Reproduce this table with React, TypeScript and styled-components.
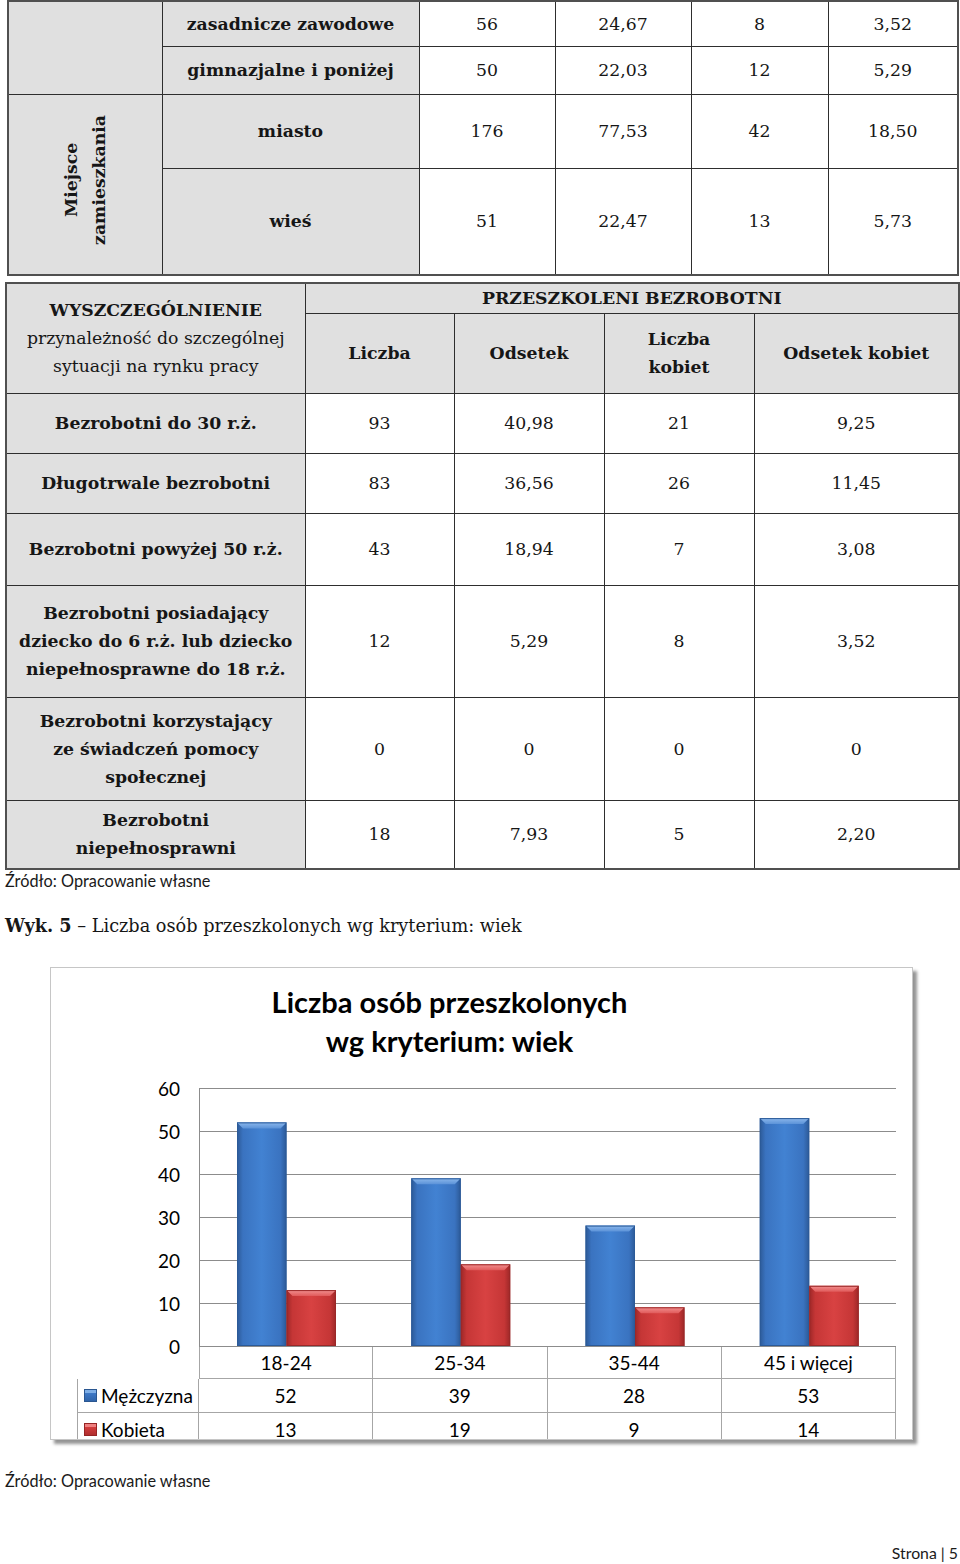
import React from 'react';
import styled, { createGlobalStyle } from 'styled-components';

const GlobalStyle = createGlobalStyle`
  html, body { margin: 0; padding: 0; background: #fff; }
  body { font-family: "DejaVu Serif", serif; color: #161616; }
`;

const Page = styled.div`
  width: 960px;
  height: 1564px;
  display: flex;
  flex-direction: column;
  overflow: hidden;
`;

const Table = styled.table<{ $left: number; $width: number; $top?: number }>`
  border-collapse: collapse;
  table-layout: fixed;
  margin: ${(p) => p.$top ?? 0}px 0 0 ${(p) => p.$left}px;
  width: ${(p) => p.$width}px;
  border: 2px solid #505050;
`;

const Row = styled.tr<{ $h: number }>`
  height: ${(p) => p.$h}px;
`;

const Cell = styled.td<{ $head?: boolean; $bold?: boolean }>`
  border: 1px solid #2e2e2e;
  background: ${(p) => (p.$head ? '#e0e0e0' : '#ffffff')};
  font-weight: ${(p) => (p.$bold ? 700 : 400)};
  text-align: center;
  vertical-align: middle;
  padding: 0 4px;
  font-size: 17.3px;
  line-height: 28px;
  color: #161616;
`;

const Strong = styled.span`
  font-weight: 700;
`;

const Vertical = styled.div`
  display: inline-block;
  writing-mode: vertical-rl;
  transform: rotate(180deg);
  font-weight: 700;
  line-height: 28px;
  text-align: center;
`;

const Note = styled.div<{ $top: number }>`
  margin: ${(p) => p.$top}px 0 0 5px;
  font-family: Lato, "Noto Sans", sans-serif;
  font-size: 16.3px;
  line-height: 22px;
  color: #1a1a1a;
`;

const Caption = styled.div`
  margin: 22px 0 0 5px;
  font-size: 17.7px;
  line-height: 24px;
  color: #161616;
`;

const Frame = styled.div`
  margin: 29px 0 0 50px;
  width: 861px;
  height: 471px;
  border: 1px solid #c6c6c6;
  box-shadow: 4px 4px 3px rgba(0, 0, 0, 0.42);
  overflow: hidden;
  display: flex;
  flex-direction: column;
  font-family: Lato, "Noto Sans", sans-serif;
  color: #000;
  background: #fff;
  flex-shrink: 0;
`;

const ChartTitle = styled.div`
  padding: 14px 64px 0 0;
  text-align: center;
  font-weight: 700;
  font-size: 29px;
  line-height: 39px;
`;

const Plot = styled.svg`
  display: block;
  margin-top: 10px;
  flex-shrink: 0;
  overflow: visible;
  position: relative;
  z-index: 1;
`;

const DataGrid = styled.div`
  display: grid;
  grid-template-columns: 122px repeat(4, 174.25px);
  grid-template-rows: 32px 34px 34px;
  margin-left: 26px;
  flex-shrink: 0;
`;

const GridCell = styled.div<{ $blank?: boolean; $left?: boolean; $legend?: boolean }>`
  box-sizing: border-box;
  display: flex;
  align-items: center;
  justify-content: ${(p) => (p.$legend ? 'flex-start' : 'center')};
  gap: 4px;
  padding-left: ${(p) => (p.$legend ? '6px' : '0')};
  font-size: 19px;
  line-height: 1;
  border-right: ${(p) => (p.$blank ? 'none' : '1px solid #a6a6a6')};
  border-bottom: ${(p) => (p.$blank ? 'none' : '1px solid #a6a6a6')};
  border-left: ${(p) => (p.$left ? '1px solid #a6a6a6' : 'none')};
`;

const Marker = styled.span<{ $c: 'blue' | 'red' }>`
  width: 13px;
  height: 13px;
  flex-shrink: 0;
  box-sizing: border-box;
  border: 1px solid ${(p) => (p.$c === 'blue' ? '#2a5690' : '#962424')};
  background: ${(p) =>
    p.$c === 'blue'
      ? 'linear-gradient(180deg, #7eaee6 0 28%, #3d78c6 30%, #2f64aa 100%)'
      : 'linear-gradient(180deg, #ee8080 0 28%, #d23c3c 30%, #b02e2e 100%)'};
`;

const Footer = styled.div`
  margin-top: auto;
  text-align: right;
  padding-right: 2px;
  font-family: Lato, "Noto Sans", sans-serif;
  font-size: 15.8px;
  line-height: 22px;
  color: #1a1a1a;
`;

const categories = ['18-24', '25-34', '35-44', '45 i więcej'];
const men = [52, 39, 28, 53];
const women = [13, 19, 9, 14];

const PX = 148;
const PW = 697;
const PY0 = 276;
const UNIT = 4.3;
const CAT = PW / 4;
const BW = 49.5;

function Bar({ x, v, color }: { x: number; v: number; color: 'blue' | 'red' }) {
  const h = v * UNIT;
  const y = PY0 - h;
  const b = 6;
  return (
    <g>
      <rect x={x} y={y} width={BW} height={h} fill={`url(#${color}Body)`} />
      <polygon
        points={`${x},${y} ${x + BW},${y} ${x + BW - b},${y + b} ${x + b},${y + b}`}
        fill={`url(#${color}Top)`}
      />
      <rect
        x={x + 0.5}
        y={y + 0.5}
        width={BW - 1}
        height={h - 1}
        fill="none"
        stroke={color === 'blue' ? '#2b5a98' : '#9a2828'}
        strokeWidth={1}
      />
    </g>
  );
}

function Chart() {
  const ticks = [0, 10, 20, 30, 40, 50, 60];
  return (
    <Plot width={850} height={277} viewBox="0 0 850 277">
      <defs>
        <linearGradient id="blueBody" x1="0" x2="1" y1="0" y2="0">
          <stop offset="0" stopColor="#2c5996" />
          <stop offset="0.12" stopColor="#3a73c0" />
          <stop offset="0.5" stopColor="#4282d2" />
          <stop offset="0.88" stopColor="#3a73c0" />
          <stop offset="1" stopColor="#2c5996" />
        </linearGradient>
        <linearGradient id="blueTop" x1="0" x2="0" y1="0" y2="1">
          <stop offset="0" stopColor="#8cb8ec" />
          <stop offset="1" stopColor="#5b92d8" />
        </linearGradient>
        <linearGradient id="redBody" x1="0" x2="1" y1="0" y2="0">
          <stop offset="0" stopColor="#9c2727" />
          <stop offset="0.12" stopColor="#c53636" />
          <stop offset="0.5" stopColor="#d84242" />
          <stop offset="0.88" stopColor="#c53636" />
          <stop offset="1" stopColor="#9c2727" />
        </linearGradient>
        <linearGradient id="redTop" x1="0" x2="0" y1="0" y2="1">
          <stop offset="0" stopColor="#f29090" />
          <stop offset="1" stopColor="#e05a5a" />
        </linearGradient>
      </defs>
      {ticks.map((t) => {
        const y = PY0 - t * UNIT + 0.5;
        return (
          <g key={t}>
            <line x1={PX} x2={PX + PW} y1={y} y2={y} stroke="#8c8c8c" strokeWidth={1} />
            <text
              x={129}
              y={y + 7}
              textAnchor="end"
              fontFamily="Lato, 'Noto Sans', sans-serif"
              fontSize={19}
              fill="#000"
            >
              {t}
            </text>
          </g>
        );
      })}
      <line x1={PX + 0.5} x2={PX + 0.5} y1={PY0 - 60 * UNIT} y2={PY0 + 1} stroke="#8c8c8c" strokeWidth={1} />
      {categories.map((c, i) => {
        const start = PX + i * CAT;
        return (
          <g key={c}>
            <Bar x={start + 38} v={men[i]} color="blue" />
            <Bar x={start + 38 + BW} v={women[i]} color="red" />
          </g>
        );
      })}
    </Plot>
  );
}

export default function App() {
  return (
    <>
      <GlobalStyle />
      <Page>
        <Table $left={7} $width={950}>
          <colgroup>
            <col style={{ width: 154 }} />
            <col style={{ width: 257 }} />
            <col style={{ width: 136 }} />
            <col style={{ width: 136 }} />
            <col style={{ width: 137 }} />
            <col style={{ width: 130 }} />
          </colgroup>
          <tbody>
            <Row $h={45}>
              <Cell $head rowSpan={2} />
              <Cell $head $bold>zasadnicze zawodowe</Cell>
              <Cell>56</Cell>
              <Cell>24,67</Cell>
              <Cell>8</Cell>
              <Cell>3,52</Cell>
            </Row>
            <Row $h={48}>
              <Cell $head $bold>gimnazjalne i poniżej</Cell>
              <Cell>50</Cell>
              <Cell>22,03</Cell>
              <Cell>12</Cell>
              <Cell>5,29</Cell>
            </Row>
            <Row $h={74}>
              <Cell $head rowSpan={2}>
                <Vertical>
                  Miejsce
                  <br />
                  zamieszkania
                </Vertical>
              </Cell>
              <Cell $head $bold>miasto</Cell>
              <Cell>176</Cell>
              <Cell>77,53</Cell>
              <Cell>42</Cell>
              <Cell>18,50</Cell>
            </Row>
            <Row $h={107}>
              <Cell $head $bold>wieś</Cell>
              <Cell>51</Cell>
              <Cell>22,47</Cell>
              <Cell>13</Cell>
              <Cell>5,73</Cell>
            </Row>
          </tbody>
        </Table>

        <Table $left={5} $width={953} $top={6}>
          <colgroup>
            <col style={{ width: 299 }} />
            <col style={{ width: 149 }} />
            <col style={{ width: 150 }} />
            <col style={{ width: 150 }} />
            <col style={{ width: 205 }} />
          </colgroup>
          <tbody>
            <Row $h={30}>
              <Cell $head rowSpan={2}>
                <Strong>WYSZCZEGÓLNIENIE</Strong>
                <br />
                przynależność do szczególnej
                <br />
                sytuacji na rynku pracy
              </Cell>
              <Cell $head $bold colSpan={4}>PRZESZKOLENI BEZROBOTNI</Cell>
            </Row>
            <Row $h={80}>
              <Cell $head $bold>Liczba</Cell>
              <Cell $head $bold>Odsetek</Cell>
              <Cell $head $bold>
                Liczba
                <br />
                kobiet
              </Cell>
              <Cell $head $bold>Odsetek kobiet</Cell>
            </Row>
            <Row $h={60}>
              <Cell $head $bold>Bezrobotni do 30 r.ż.</Cell>
              <Cell>93</Cell>
              <Cell>40,98</Cell>
              <Cell>21</Cell>
              <Cell>9,25</Cell>
            </Row>
            <Row $h={60}>
              <Cell $head $bold>Długotrwale bezrobotni</Cell>
              <Cell>83</Cell>
              <Cell>36,56</Cell>
              <Cell>26</Cell>
              <Cell>11,45</Cell>
            </Row>
            <Row $h={72}>
              <Cell $head $bold>Bezrobotni powyżej 50 r.ż.</Cell>
              <Cell>43</Cell>
              <Cell>18,94</Cell>
              <Cell>7</Cell>
              <Cell>3,08</Cell>
            </Row>
            <Row $h={112}>
              <Cell $head $bold>
                Bezrobotni posiadający
                <br />
                dziecko do 6 r.ż. lub dziecko
                <br />
                niepełnosprawne do 18 r.ż.
              </Cell>
              <Cell>12</Cell>
              <Cell>5,29</Cell>
              <Cell>8</Cell>
              <Cell>3,52</Cell>
            </Row>
            <Row $h={103}>
              <Cell $head $bold>
                Bezrobotni korzystający
                <br />
                ze świadczeń pomocy
                <br />
                społecznej
              </Cell>
              <Cell>0</Cell>
              <Cell>0</Cell>
              <Cell>0</Cell>
              <Cell>0</Cell>
            </Row>
            <Row $h={69}>
              <Cell $head $bold>
                Bezrobotni
                <br />
                niepełnosprawni
              </Cell>
              <Cell>18</Cell>
              <Cell>7,93</Cell>
              <Cell>5</Cell>
              <Cell>2,20</Cell>
            </Row>
          </tbody>
        </Table>

        <Note $top={0}>Źródło: Opracowanie własne</Note>
        <Caption>
          <Strong>Wyk. 5</Strong> – Liczba osób przeszkolonych wg kryterium: wiek
        </Caption>

        <Frame>
          <ChartTitle>
            Liczba osób przeszkolonych
            <br />
            wg kryterium: wiek
          </ChartTitle>
          <Chart />
          <DataGrid>
            <GridCell $blank />
            {categories.map((c, i) => (
              <GridCell key={c} $left={i === 0}>
                {c}
              </GridCell>
            ))}
            <GridCell $legend $left>
              <Marker $c="blue" />
              Mężczyzna
            </GridCell>
            {men.map((v, i) => (
              <GridCell key={`m${i}`}>{v}</GridCell>
            ))}
            <GridCell $legend $left>
              <Marker $c="red" />
              Kobieta
            </GridCell>
            {women.map((v, i) => (
              <GridCell key={`k${i}`}>{v}</GridCell>
            ))}
          </DataGrid>
        </Frame>

        <Note $top={30}>Źródło: Opracowanie własne</Note>
        <Footer>Strona | 5</Footer>
      </Page>
    </>
  );
}
